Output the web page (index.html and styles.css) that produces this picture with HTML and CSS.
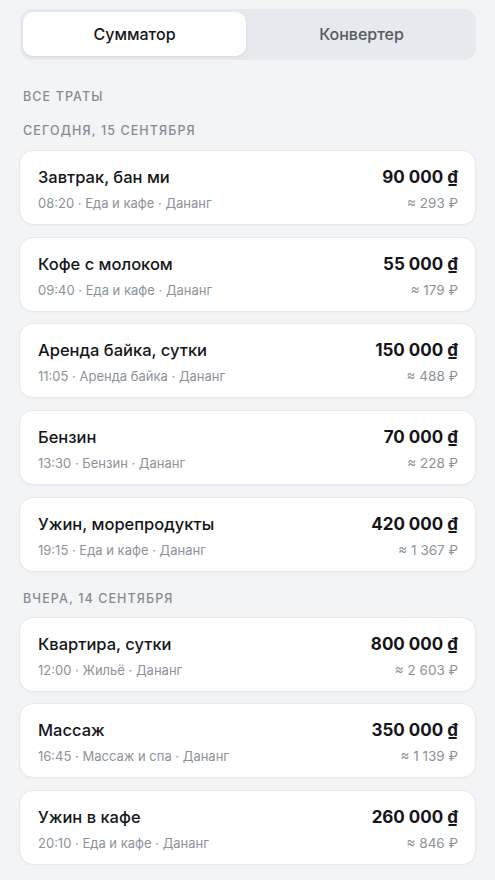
FILE: index.html
```html
<!DOCTYPE html>
<html lang="ru">
<head>
  <meta charset="UTF-8" />
  <meta name="viewport" content="width=device-width, initial-scale=1.0"/>
  <title>Сумматор</title>
  <link rel="stylesheet" href="styles.css">
</head>
<body>
  <div class="tabs">
    <div class="tab active">Сумматор</div>
    <div class="tab">Конвертер</div>
  </div>

  <div class="heading">Все траты</div>

  <div class="day">Сегодня, 15 сентября</div>
  <div class="list">
    <div class="card">
      <div class="row"><span class="name">Завтрак, бан ми</span><span class="amount">90 000 ₫</span></div>
      <div class="row"><span class="meta">08:20 · Еда и кафе · Дананг</span><span class="rub">≈ 293 ₽</span></div>
    </div>
    <div class="card">
      <div class="row"><span class="name">Кофе с молоком</span><span class="amount">55 000 ₫</span></div>
      <div class="row"><span class="meta">09:40 · Еда и кафе · Дананг</span><span class="rub">≈ 179 ₽</span></div>
    </div>
    <div class="card">
      <div class="row"><span class="name">Аренда байка, сутки</span><span class="amount">150 000 ₫</span></div>
      <div class="row"><span class="meta">11:05 · Аренда байка · Дананг</span><span class="rub">≈ 488 ₽</span></div>
    </div>
    <div class="card">
      <div class="row"><span class="name">Бензин</span><span class="amount">70 000 ₫</span></div>
      <div class="row"><span class="meta">13:30 · Бензин · Дананг</span><span class="rub">≈ 228 ₽</span></div>
    </div>
    <div class="card">
      <div class="row"><span class="name">Ужин, морепродукты</span><span class="amount">420 000 ₫</span></div>
      <div class="row"><span class="meta">19:15 · Еда и кафе · Дананг</span><span class="rub">≈ 1 367 ₽</span></div>
    </div>
  </div>

  <div class="day">Вчера, 14 сентября</div>
  <div class="list">
    <div class="card">
      <div class="row"><span class="name">Квартира, сутки</span><span class="amount">800 000 ₫</span></div>
      <div class="row"><span class="meta">12:00 · Жильё · Дананг</span><span class="rub">≈ 2 603 ₽</span></div>
    </div>
    <div class="card">
      <div class="row"><span class="name">Массаж</span><span class="amount">350 000 ₫</span></div>
      <div class="row"><span class="meta">16:45 · Массаж и спа · Дананг</span><span class="rub">≈ 1 139 ₽</span></div>
    </div>
    <div class="card">
      <div class="row"><span class="name">Ужин в кафе</span><span class="amount">260 000 ₫</span></div>
      <div class="row"><span class="meta">20:10 · Еда и кафе · Дананг</span><span class="rub">≈ 846 ₽</span></div>
    </div>
  </div>
</body>
</html>
```

FILE: styles.css
```css
* {
  box-sizing: border-box;
  margin: 0;
  padding: 0;
  font-family: Inter, "Noto Sans", sans-serif;
}

body {
  background-color: #f2f4f6;
  color: #14161a;
  padding: 9px 19px 0;
}

.tabs {
  display: flex;
  gap: 4px;
  background: #e6e9ed;
  border-radius: 12px;
  padding: 3px 3px 4px;
  margin-left: 1px;
}

.tab {
  flex: 1;
  height: 44px;
  display: flex;
  align-items: center;
  justify-content: center;
  font-size: 16px;
  font-weight: 500;
  color: #545a63;
  border-radius: 10px;
}

.tab.active {
  background: #fff;
  color: #14161a;
  box-shadow: 0 1px 3px rgba(0,0,0,0.08);
}

.heading,
.day {
  font-size: 12.5px;
  font-weight: 500;
  letter-spacing: 1.1px;
  text-transform: uppercase;
  color: #868b93;
  padding-left: 4px;
}

.heading {
  margin-top: 29px;
}

.day {
  margin-top: 19px;
  margin-bottom: 12px;
}

.list {
  display: flex;
  flex-direction: column;
  gap: 11.7px;
}

.list + .day {
  margin-top: 19px;
  margin-bottom: 11px;
}

.card {
  background: #fff;
  border: 1px solid #e6e8eb;
  border-radius: 14px;
  height: 75px;
  padding: 14px 17px 0 18px;
  box-shadow: 0 1px 2px rgba(0,0,0,0.03);
}

.row {
  display: flex;
  justify-content: space-between;
  align-items: baseline;
}

.row + .row {
  margin-top: 2px;
}

.name {
  font-size: 16.5px;
  font-weight: 500;
  line-height: 24px;
}

.amount {
  font-size: 17px;
  font-weight: 700;
  line-height: 24px;
}

.meta,
.rub {
  font-size: 13px;
  color: #8d929a;
  line-height: 24px;
}

.rub {
  font-size: 13.5px;
}
```
